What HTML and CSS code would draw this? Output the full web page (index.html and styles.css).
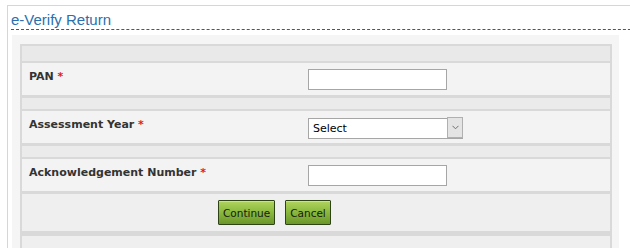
FILE: index.html
```html
<!DOCTYPE html>
<html lang="en">
<head>
    <meta charset="UTF-8">
    <meta name="viewport" content="width=device-width, initial-scale=1.0">
    <title>e-Verify Return</title>
    <link rel="stylesheet" href="styles.css">
</head>
<body>

    <div class="page">
        <h2 class="page-title">e-Verify Return</h2>

        <div class="panel">
            <div class="form-table">
                <div class="row row-head"></div>

                <div class="row row-field">
                    <label class="field-label" for="pan">PAN <span class="req">*</span></label>
                    <div class="field-input">
                        <input type="text" class="text-box" id="pan">
                    </div>
                </div>

                <div class="row row-gap"></div>

                <div class="row row-field">
                    <label class="field-label" for="assessmentYear">Assessment Year <span class="req">*</span></label>
                    <div class="field-input">
                        <div class="select-wrap">
                            <select class="select-box" id="assessmentYear">
                                <option>Select</option>
                                <option>2015-16</option>
                                <option>2014-15</option>
                            </select>
                            <span class="select-arrow">
                                <svg width="7" height="5" viewBox="0 0 7 5"><polyline points="0.5,0.8 3.5,3.8 6.5,0.8" fill="none" stroke="#6f6f6f" stroke-width="1"/></svg>
                            </span>
                        </div>
                    </div>
                </div>

                <div class="row row-gap"></div>

                <div class="row row-field">
                    <label class="field-label" for="ackNumber">Acknowledgement Number <span class="req">*</span></label>
                    <div class="field-input">
                        <input type="text" class="text-box" id="ackNumber">
                    </div>
                </div>

                <div class="row row-actions">
                    <button class="btn" id="continueButton">Continue</button>
                    <button class="btn" id="cancelButton">Cancel</button>
                </div>

                <div class="row row-foot"></div>
            </div>
        </div>
    </div>

</body>
</html>
```

FILE: styles.css
```css
html {
    overflow: hidden;
}

body {
    margin: 0;
    padding: 5px 0 0 7px;
    background-color: #ffffff;
    font-family: "DejaVu Sans", Verdana, sans-serif;
}

.page {
    width: 650px;
    height: 400px;
    border-top: 1px solid #d6d6d6;
    border-left: 1px solid #d6d6d6;
    padding-left: 3px;
}

.page-title {
    margin: 0;
    padding-top: 4px;
    font-family: "Liberation Sans", Arial, sans-serif;
    font-size: 15px;
    font-weight: normal;
    line-height: 19px;
    color: #2a70ae;
    border-bottom: 1px dashed #555555;
}

.panel {
    box-sizing: border-box;
    width: 607px;
    margin: 5px 0 0 1px;
    padding: 9px 7px 9px 8px;
    background-color: #f5f5f5;
}

.form-table {
    display: flex;
    flex-direction: column;
    gap: 2px;
    padding: 2px;
    background-color: #d9d9d9;
}

.row-head {
    height: 15px;
    background-color: #e9e9e9;
}

.row-field {
    display: grid;
    grid-template-columns: 286px 1fr;
    height: 32px;
    background-color: #f3f3f3;
}

.row-gap {
    height: 11px;
    margin-top: 1px;
    background-color: #ebebeb;
}

.row-actions {
    display: flex;
    align-items: center;
    gap: 10px;
    height: 37px;
    margin-top: 1px;
    padding-left: 196px;
    background-color: #efefef;
}

.row-foot {
    height: 20px;
    margin-top: 3px;
    background-color: #efefef;
}

.field-label {
    align-self: center;
    padding: 0 0 6px 7px;
    font-size: 11px;
    font-weight: bold;
    line-height: 13px;
    color: #333333;
}

.req {
    color: #e01b1b;
}

.field-input {
    display: flex;
    align-items: center;
}

.text-box {
    box-sizing: border-box;
    width: 139px;
    height: 21px;
    margin: 0;
    padding: 0 3px;
    border: 1px solid #a6a6a6;
    background-color: #ffffff;
    font-family: "DejaVu Sans", Verdana, sans-serif;
    font-size: 11px;
}

.select-wrap {
    position: relative;
    width: 155px;
    height: 21px;
}

.select-box {
    box-sizing: border-box;
    width: 100%;
    height: 100%;
    margin: 0;
    padding: 0 0 0 4px;
    border: 1px solid #a6a6a6;
    border-radius: 0;
    background-color: #ffffff;
    font-family: "DejaVu Sans", Verdana, sans-serif;
    font-size: 11px;
    color: #000000;
    appearance: none;
    -webkit-appearance: none;
}

.select-arrow {
    position: absolute;
    top: 0;
    right: 0;
    box-sizing: border-box;
    width: 16px;
    height: 21px;
    border: 1px solid #b0b0b0;
    background-color: #e4e4e4;
    display: flex;
    justify-content: center;
    align-items: center;
    pointer-events: none;
}

.btn {
    height: 25px;
    margin: 0;
    padding: 0 4px;
    border: 1px solid #2f4416;
    border-radius: 1px;
    background: linear-gradient(to bottom, #b0d35f 0%, #8dbb40 45%, #6a962a 100%);
    box-shadow: inset 0 1px 0 rgba(255, 255, 255, 0.35);
    font-family: "DejaVu Sans", Verdana, sans-serif;
    font-size: 10.5px;
    color: #14200a;
    cursor: pointer;
}

.btn:hover {
    background: linear-gradient(to bottom, #a6cb58 0%, #85b13c 45%, #638c27 100%);
}
```
